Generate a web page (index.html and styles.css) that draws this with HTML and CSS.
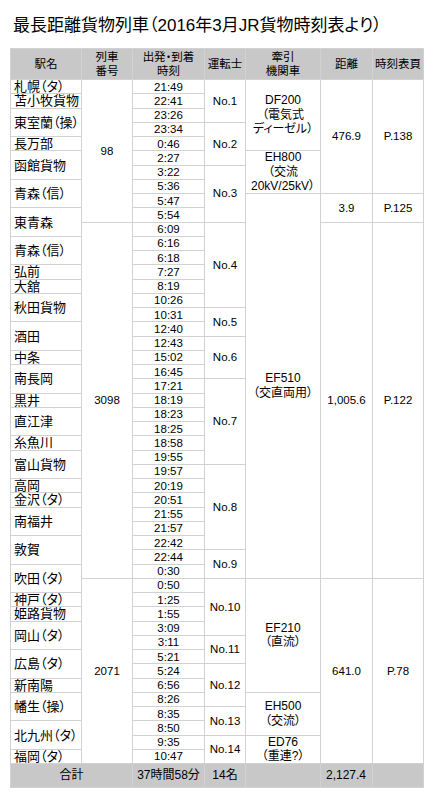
FILE: index.html
```html
<!DOCTYPE html>
<html lang="ja">
<head>
<meta charset="utf-8">
<title>最長距離貨物列車</title>
<link rel="stylesheet" href="styles.css">
</head>
<body>
<h1 class="title">最長距離貨物列車（2016年3月JR貨物時刻表より）</h1>
<div class="tbl">
  <div class="c h">駅名</div>
  <div class="c h">列車<br>番号</div>
  <div class="c h">出発・到着<br>時刻</div>
  <div class="c h">運転士</div>
  <div class="c h">牽引<br>機関車</div>
  <div class="c h">距離</div>
  <div class="c h">時刻表頁</div>

  <!-- row 1 -->
  <div class="c st">札幌（タ）</div>
  <div class="c r10">98</div>
  <div class="c">21:49</div>
  <div class="c r3">No.1</div>
  <div class="c r5 lc">DF200<br>（電気式<br>ディーゼル）</div>
  <div class="c r8">476.9</div>
  <div class="c r8">P.138</div>
  <!-- row 2 -->
  <div class="c st">苫小牧貨物</div>
  <div class="c">22:41</div>
  <!-- row 3 -->
  <div class="c st r2">東室蘭（操）</div>
  <div class="c">23:26</div>
  <!-- row 4 -->
  <div class="c">23:34</div>
  <div class="c r3">No.2</div>
  <!-- row 5 -->
  <div class="c st">長万部</div>
  <div class="c">0:46</div>
  <!-- row 6 -->
  <div class="c st r2">函館貨物</div>
  <div class="c">2:27</div>
  <div class="c r3 lc">EH800<br>（交流<br>20kV/25kV）</div>
  <!-- row 7 -->
  <div class="c">3:22</div>
  <div class="c r4">No.3</div>
  <!-- row 8 -->
  <div class="c st r2">青森（信）</div>
  <div class="c">5:36</div>
  <!-- row 9 -->
  <div class="c">5:47</div>
  <div class="c r27 lc">EF510<br>（交直両用）</div>
  <div class="c r2">3.9</div>
  <div class="c r2">P.125</div>
  <!-- row 10 -->
  <div class="c st r2">東青森</div>
  <div class="c">5:54</div>
  <!-- row 11 -->
  <div class="c r25">3098</div>
  <div class="c">6:09</div>
  <div class="c r6">No.4</div>
  <div class="c r25">1,005.6</div>
  <div class="c r25">P.122</div>
  <!-- row 12 -->
  <div class="c st r2">青森（信）</div>
  <div class="c">6:16</div>
  <!-- row 13 -->
  <div class="c">6:18</div>
  <!-- row 14 -->
  <div class="c st">弘前</div>
  <div class="c">7:27</div>
  <!-- row 15 -->
  <div class="c st">大舘</div>
  <div class="c">8:19</div>
  <!-- row 16 -->
  <div class="c st r2">秋田貨物</div>
  <div class="c">10:26</div>
  <!-- row 17 -->
  <div class="c">10:31</div>
  <div class="c r2">No.5</div>
  <!-- row 18 -->
  <div class="c st r2">酒田</div>
  <div class="c">12:40</div>
  <!-- row 19 -->
  <div class="c">12:43</div>
  <div class="c r3">No.6</div>
  <!-- row 20 -->
  <div class="c st">中条</div>
  <div class="c">15:02</div>
  <!-- row 21 -->
  <div class="c st r2">南長岡</div>
  <div class="c">16:45</div>
  <!-- row 22 -->
  <div class="c">17:21</div>
  <div class="c r6">No.7</div>
  <!-- row 23 -->
  <div class="c st">黒井</div>
  <div class="c">18:19</div>
  <!-- row 24 -->
  <div class="c st r2">直江津</div>
  <div class="c">18:23</div>
  <!-- row 25 -->
  <div class="c">18:25</div>
  <!-- row 26 -->
  <div class="c st">糸魚川</div>
  <div class="c">18:58</div>
  <!-- row 27 -->
  <div class="c st r2">富山貨物</div>
  <div class="c">19:55</div>
  <!-- row 28 -->
  <div class="c">19:57</div>
  <div class="c r6">No.8</div>
  <!-- row 29 -->
  <div class="c st">高岡</div>
  <div class="c">20:19</div>
  <!-- row 30 -->
  <div class="c st">金沢（タ）</div>
  <div class="c">20:51</div>
  <!-- row 31 -->
  <div class="c st r2">南福井</div>
  <div class="c">21:55</div>
  <!-- row 32 -->
  <div class="c">21:57</div>
  <!-- row 33 -->
  <div class="c st r2">敦賀</div>
  <div class="c">22:42</div>
  <!-- row 34 -->
  <div class="c">22:44</div>
  <div class="c r2">No.9</div>
  <!-- row 35 -->
  <div class="c st r2">吹田（タ）</div>
  <div class="c">0:30</div>
  <!-- row 36 -->
  <div class="c r13">2071</div>
  <div class="c">0:50</div>
  <div class="c r4">No.10</div>
  <div class="c r8 lc">EF210<br>（直流）</div>
  <div class="c r13">641.0</div>
  <div class="c r13">P.78</div>
  <!-- row 37 -->
  <div class="c st">神戸（タ）</div>
  <div class="c">1:25</div>
  <!-- row 38 -->
  <div class="c st">姫路貨物</div>
  <div class="c">1:55</div>
  <!-- row 39 -->
  <div class="c st r2">岡山（タ）</div>
  <div class="c">3:09</div>
  <!-- row 40 -->
  <div class="c">3:11</div>
  <div class="c r2">No.11</div>
  <!-- row 41 -->
  <div class="c st r2">広島（タ）</div>
  <div class="c">5:21</div>
  <!-- row 42 -->
  <div class="c">5:24</div>
  <div class="c r3">No.12</div>
  <!-- row 43 -->
  <div class="c st">新南陽</div>
  <div class="c">6:56</div>
  <!-- row 44 -->
  <div class="c st r2">幡生（操）</div>
  <div class="c">8:26</div>
  <div class="c r3 lc">EH500<br>（交流）</div>
  <!-- row 45 -->
  <div class="c">8:35</div>
  <div class="c r2">No.13</div>
  <!-- row 46 -->
  <div class="c st r2">北九州（タ）</div>
  <div class="c">8:50</div>
  <!-- row 47 -->
  <div class="c">9:35</div>
  <div class="c r2">No.14</div>
  <div class="c r2 lc">ED76<br>（重連?）</div>
  <!-- row 48 -->
  <div class="c st">福岡（タ）</div>
  <div class="c">10:47</div>

  <!-- total -->
  <div class="c t c2">合計</div>
  <div class="c t">37時間58分</div>
  <div class="c t">14名</div>
  <div class="c t"></div>
  <div class="c t left">2,127.4</div>
  <div class="c t"></div>
</div>
</body>
</html>
```
FILE: styles.css
```css
html, body {
  margin: 0;
  padding: 0;
  background: #ffffff;
}
body {
  font-family: "Liberation Sans", "Noto Sans CJK JP", sans-serif;
  color: #000000;
  font-feature-settings: "palt";
}
.title {
  margin: 14px 0 10px 13px;
  font-size: 17px;
  line-height: 24px;
  font-weight: normal;
  letter-spacing: 0;
}
.tbl {
  display: grid;
  grid-template-columns: 70px 50px 71px 40px 74px 51px 50px;
  grid-template-rows: 30px repeat(48, 13.25px) 22.5px;
  gap: 1px;
  background: #d2d2d2;
  border: 1px solid #d2d2d2;
  width: max-content;
  margin-left: 10px;
}
.c {
  background: #ffffff;
  display: flex;
  align-items: center;
  justify-content: center;
  text-align: center;
  font-size: 11.5px;
  line-height: 14.25px;
  white-space: nowrap;
  overflow: visible;
  min-height: 0;
}
.h {
  background: #c8c8c8;
  font-size: 11.5px;
  line-height: 14px;
}
.st {
  justify-content: flex-start;
  padding-left: 3px;
  font-size: 13px;
  line-height: 13px;
}
.lc {
  font-size: 12px;
  line-height: 14.5px;
}
.t {
  background: #c8c8c8;
  font-size: 12px;
}
.left {
  justify-content: flex-start;
  padding-left: 5px;
}
.r2 { grid-row: span 2; }
.r3 { grid-row: span 3; }
.r4 { grid-row: span 4; }
.r5 { grid-row: span 5; }
.r6 { grid-row: span 6; }
.r8 { grid-row: span 8; }
.r10 { grid-row: span 10; }
.r13 { grid-row: span 13; }
.r25 { grid-row: span 25; }
.r27 { grid-row: span 27; }
.c2 { grid-column: span 2; }
```
